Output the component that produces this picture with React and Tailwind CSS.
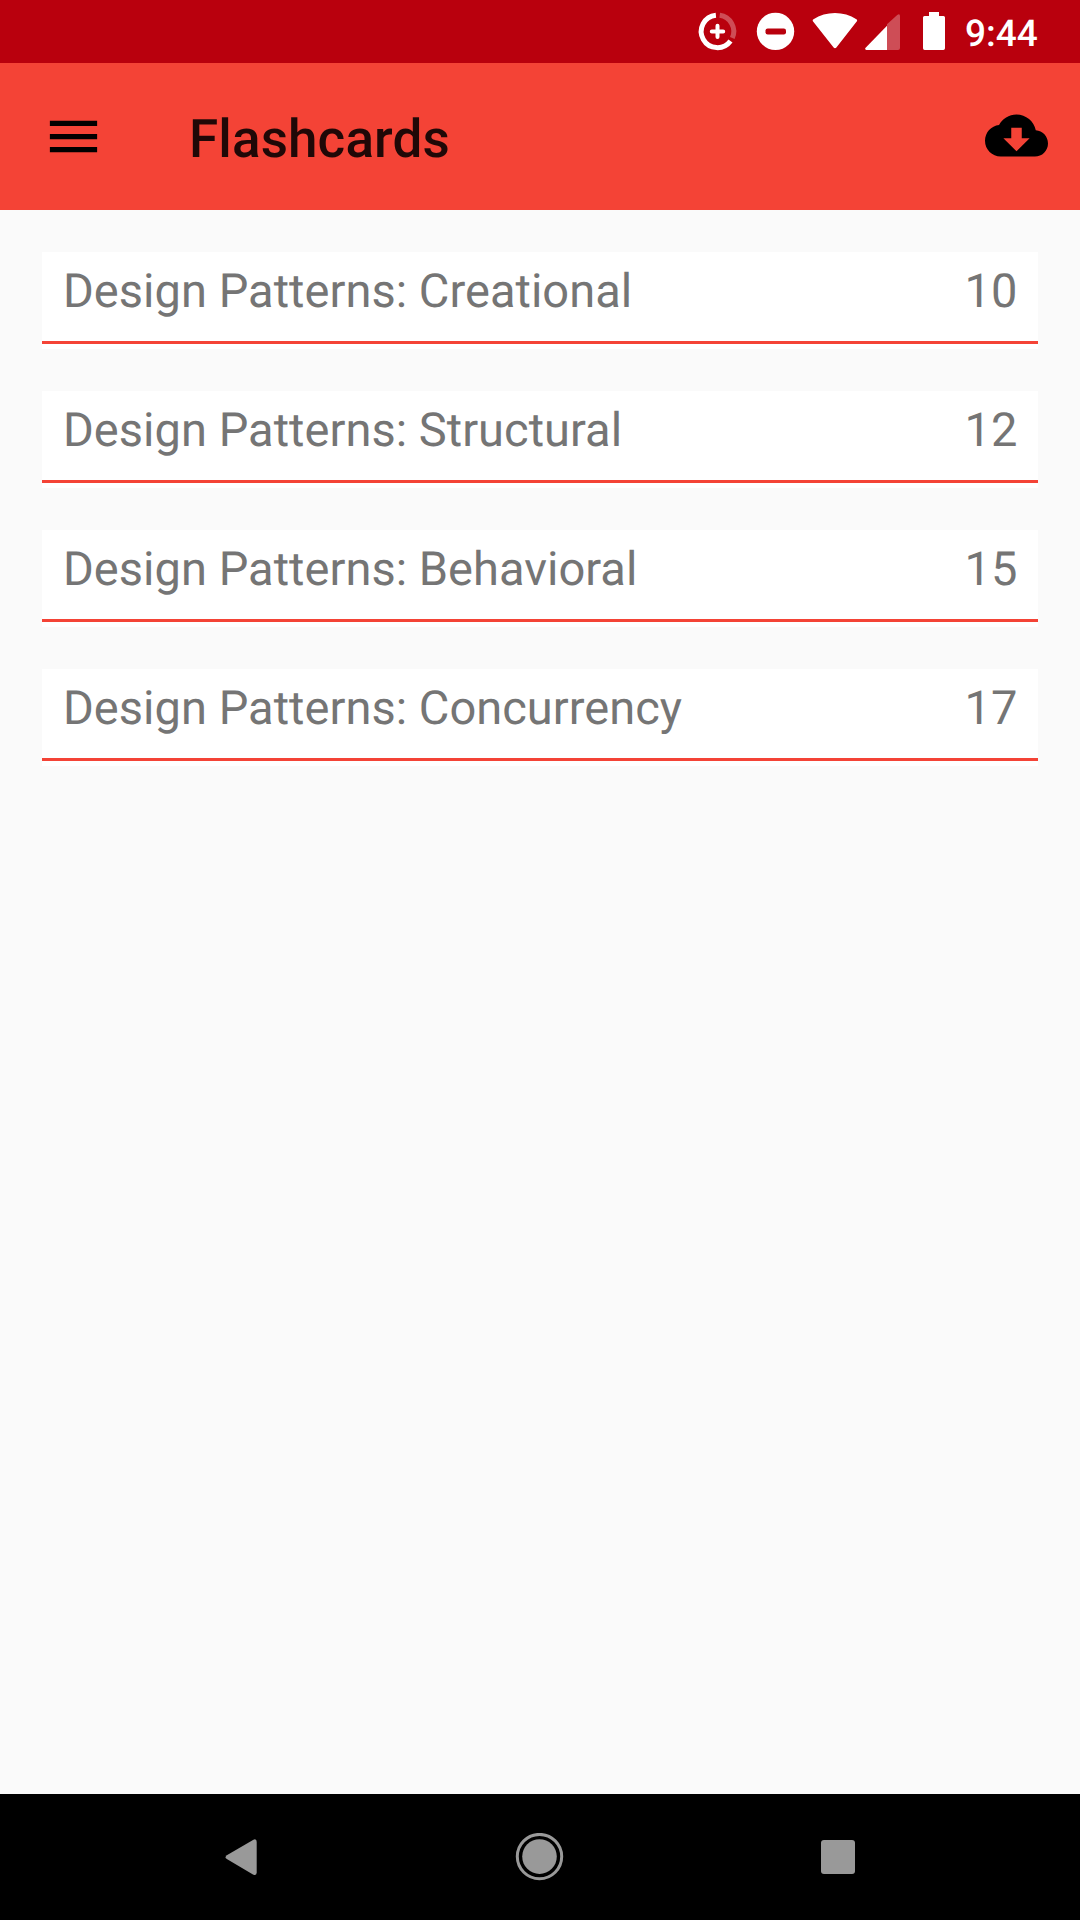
const decks = [
  { name: 'Design Patterns: Creational', count: 10 },
  { name: 'Design Patterns: Structural', count: 12 },
  { name: 'Design Patterns: Behavioral', count: 15 },
  { name: 'Design Patterns: Concurrency', count: 17 },
];

function DataSaverIcon() {
  return (
    <svg className="overflow-visible" width="38" height="38" viewBox="-18.5 -19.4 38 38" fill="none" stroke="#fff">
      <path d="M-1.6 -16.1A16.2 16.2 0 1 0 13 9.6" strokeWidth="5" />
      <path d="M2.2 -16.1A16.2 16.2 0 0 1 14.8 6.6" strokeWidth="5" strokeOpacity="0.3" />
      <path d="M-5.7 0H5.7M0 -5.7V5.7" strokeWidth="4" strokeLinecap="round" />
    </svg>
  );
}

function DoNotDisturbIcon() {
  return (
    <svg className="overflow-visible" width="38" height="38" viewBox="-18.5 -19.4 38 38">
      <circle r="18.7" fill="#fff" />
      <rect x="-10" y="-3" width="20.5" height="6" rx="2.2" fill="#b9000d" />
    </svg>
  );
}

function WifiIcon() {
  return (
    <svg width="46" height="38" viewBox="0 0 46 38" fill="#fff">
      <path d="M1.1 9.6Q0.1 8.2 1.5 7.3C14 -1.2 32 -1.2 44.4 7.3Q45.7 8.2 44.7 9.6L24.4 35.4Q23 37 21.6 35.4Z" />
    </svg>
  );
}

function SignalIcon() {
  return (
    <svg width="36" height="38" viewBox="0 0 36 38" fill="#fff">
      <path d="M22 12.2L32.2 2.9Q35 1.3 35 4V36Q35 38 33 38H22Z" fillOpacity="0.3" />
      <path d="M22 13.8V38H1.3Q-0.4 37.6 0.4 35.9Z" />
    </svg>
  );
}

function BatteryIcon() {
  return (
    <svg width="22" height="38" viewBox="0 0 22 38" fill="#fff">
      <path d="M6 0H16V4H20.5Q22 4 22 5.5V36.3Q22 38 20.3 38H1.7Q0 38 0 36.3V5.5Q0 4 1.5 4H6Z" />
    </svg>
  );
}

function StatusBar() {
  return (
    <div className="flex h-[63px] items-start justify-end bg-[#b9000d] pr-[42px] pt-3">
      <div className="mr-5"><DataSaverIcon /></div>
      <div className="mr-[17px]"><DoNotDisturbIcon /></div>
      <div className="mr-[7px]"><WifiIcon /></div>
      <div className="mr-[22px]"><SignalIcon /></div>
      <div className="mr-5"><BatteryIcon /></div>
      <span className="mt-px w-[73px] whitespace-nowrap text-[37px] font-medium leading-[43px] text-white">9:44</span>
    </div>
  );
}

function AppBar() {
  return (
    <header className="flex h-[147px] items-center bg-[#f44336] pl-[42px] pr-8">
      <button aria-label="Menu" className="mr-[84px]">
        <svg width="63" height="63" viewBox="0 0 24 24">
          <path d="M3 18h18v-2H3v2zm0-5h18v-2H3v2zm0-7v2h18V6H3z" />
        </svg>
      </button>
      <h1 className="flex-1 pt-[5px] text-[53px] font-medium leading-[62px] tracking-[0.12px] text-black/[0.87]">Flashcards</h1>
      <button aria-label="Download" className="pb-[2px]">
        <svg width="63" height="63" viewBox="0 0 24 24">
          <path d="M19.35 10.04C18.67 6.59 15.64 4 12 4 9.11 4 6.6 5.64 5.35 8.04 2.34 8.36 0 10.91 0 14c0 3.31 2.69 6 6 6h13c2.76 0 5-2.24 5-5 0-2.64-2.05-4.78-4.65-4.96zM17 13l-5 5-5-5h3V9h4v4h3z" />
        </svg>
      </button>
    </header>
  );
}

function DeckRow({ name, count }) {
  return (
    <li className="h-[97px] bg-white">
      <div className="flex h-[92px] justify-between border-b-[3px] border-[#f44336] px-[21px] pt-3 text-[47px] leading-[56px] tracking-[0.03px] text-[#757575]">
        <span>{name}</span>
        <span className="-mr-[0.5px]">{count}</span>
      </div>
    </li>
  );
}

function NavigationBar() {
  return (
    <nav className="flex h-[126px] items-center bg-black pl-[225px] text-[#999]">
      <svg width="32" height="38" viewBox="0 0 32 38" fill="currentColor">
        <path d="M28 1.9Q31.7 0.2 31.7 4V34.5Q31.7 38.2 28 36.4L1.8 21Q-0.6 19.2 1.8 17.3Z" />
      </svg>
      <svg className="ml-[258px]" width="49" height="49" viewBox="-24.5 -24.5 49 49">
        <circle cy="-0.9" r="22.2" fill="none" stroke="currentColor" strokeWidth="3" />
        <circle cy="-0.9" r="17.3" fill="currentColor" />
      </svg>
      <div className="ml-[257px] size-[34px] rounded-[3px] bg-[#999]" />
    </nav>
  );
}

export default function App() {
  return (
    <div className="flex h-[1920px] w-[1080px] flex-col overflow-hidden bg-[#fafafa] font-['Roboto',sans-serif] [text-rendering:geometricPrecision]">
      <StatusBar />
      <AppBar />
      <main className="flex-1 px-[42px] pt-[42px]">
        <ul className="flex flex-col gap-[42px]">
          {decks.map((deck) => (
            <DeckRow key={deck.name} name={deck.name} count={deck.count} />
          ))}
        </ul>
      </main>
      <NavigationBar />
    </div>
  );
}
